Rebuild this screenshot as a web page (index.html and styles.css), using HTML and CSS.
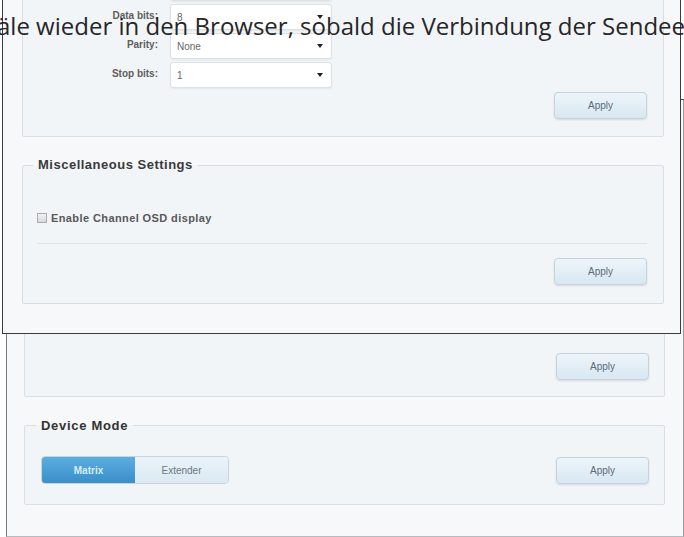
FILE: index.html
```html
<!DOCTYPE html>
<html lang="de">
<head>
  <meta charset="UTF-8">
  <title>Device Settings</title>
  <link rel="stylesheet" href="styles.css">
</head>
<body>
  <div class="page">

    <!-- hintere Aufnahme -->
    <div class="shot back">
      <fieldset class="panel video-panel">
        <div class="panel-foot">
          <button class="apply">Apply</button>
        </div>
      </fieldset>
      <fieldset class="panel mode-panel">
        <legend class="big">Device Mode</legend>
        <div class="panel-foot spread">
          <div class="segmented">
            <span class="seg on">Matrix</span>
            <span class="seg">Extender</span>
          </div>
          <button class="apply">Apply</button>
        </div>
      </fieldset>
    </div>

    <!-- vordere Aufnahme -->
    <div class="shot front">
      <fieldset class="panel serial-panel">
        <div class="row">
          <label>Baud rate:</label>
          <div class="select"><span>9600</span><i class="caret"></i></div>
        </div>
        <div class="row">
          <label>Data bits:</label>
          <div class="select"><span>8</span><i class="caret"></i></div>
        </div>
        <div class="row">
          <label>Parity:</label>
          <div class="select"><span>None</span><i class="caret"></i></div>
        </div>
        <div class="row">
          <label>Stop bits:</label>
          <div class="select"><span>1</span><i class="caret"></i></div>
        </div>
        <div class="panel-foot serial-foot">
          <button class="apply">Apply</button>
        </div>
      </fieldset>

      <fieldset class="panel misc-panel">
        <legend>Miscellaneous Settings</legend>
        <div class="check-row">
          <span class="checkbox"></span>
          <span>Enable Channel OSD display</span>
        </div>
        <hr class="sep">
        <div class="panel-foot">
          <button class="apply">Apply</button>
        </div>
      </fieldset>
    </div>

    <span class="edge-tick"></span>

    <p class="doc-line">äle wieder in den Browser, sobald die Verbindung der Sendee</p>
  </div>
</body>
</html>
```

FILE: styles.css
```css
body {
  margin: 0;
  padding: 0;
  background: #ffffff;
  font-family: 'Liberation Sans', Arial, sans-serif;
}
.page {
  position: relative;
  width: 684px;
  height: 537px;
  overflow: hidden;
  padding-top: 99px;
  box-sizing: border-box;
}

/* screenshot frames */
.shot {
  box-sizing: border-box;
  background: #f6f8fa;
}
.back {
  margin-left: 6px;
  width: 678px;
  height: 438px;
  border: 1px solid #9a9a9a;
  border-top-color: #444;
  border-left-color: #7a7a7a;
  border-bottom-color: #b8bbbe;
  padding: 0 18px 31px 17px;
  display: flex;
  flex-direction: column;
  justify-content: flex-end;
  gap: 21px;
}
.front {
  position: absolute;
  left: 2px;
  top: -40px;
  width: 679px;
  border: 1px solid #3c3c3c;
  padding: 0 16px 29px 19px;
  display: flex;
  flex-direction: column;
  gap: 21px;
}

/* panels */
.panel {
  margin: 0;
  border: 1px solid #d9dee3;
  border-radius: 2px;
  background: #f2f5f8;
  padding: 0 16px 16px 15px;
  min-width: 0;
}
.panel legend {
  margin-left: -5px;
  padding: 0 5px;
  font-size: 13px;
  line-height: 14px;
  letter-spacing: 0.5px;
  font-weight: bold;
  color: #3a3a3a;
}
.panel legend.big {
  line-height: 15px;
  letter-spacing: 0.7px;
  color: #333;
}
.panel-foot {
  display: flex;
  justify-content: flex-end;
  align-items: center;
}
.back .panel {
  padding: 0 15px 16px 16px;
}
.back .video-panel {
  padding-top: 160px;
}
.back .mode-panel {
  padding-top: 23px;
  padding-bottom: 20px;
}
.spread {
  justify-content: space-between;
}

/* serial rows */
.serial-panel {
  padding-top: 13px;
  padding-bottom: 17px;
}
.row {
  display: flex;
  align-items: center;
  height: 26px;
  margin-bottom: 3px;
}
.row label {
  width: 120px;
  margin-right: 12px;
  text-align: right;
  font-size: 10px;
  font-weight: bold;
  color: #5d5d5d;
  position: relative;
  top: -2px;
}
.select {
  width: 162px;
  height: 26px;
  box-sizing: border-box;
  background: #fff;
  border: 1px solid #dde1e5;
  border-radius: 3px;
  box-shadow: 0 1px 2px rgba(0,0,0,0.06);
  display: flex;
  align-items: center;
  justify-content: space-between;
  padding: 0 8px 0 6px;
  font-size: 10px;
  color: #666;
}
.caret {
  width: 0;
  height: 0;
  border-left: 3px solid transparent;
  border-right: 3px solid transparent;
  border-top: 4px solid #222;
}
.serial-foot {
  margin-top: 4px;
}

/* misc */
.misc-panel {
  padding-top: 39px;
  padding-bottom: 18px;
}
.check-row {
  display: flex;
  align-items: center;
  gap: 4px;
  height: 14px;
  margin-left: -1px;
  font-size: 11px;
  letter-spacing: 0.4px;
  font-weight: bold;
  color: #585858;
}
.checkbox {
  width: 8px;
  height: 8px;
  border: 1px solid #a9adb1;
  background: linear-gradient(#f2f2f2, #d6d8da);
}
.sep {
  margin: 18px 0 14px;
  border: 0;
  border-top: 1px solid #dde2e6;
}

/* buttons */
.apply {
  width: 93px;
  height: 27px;
  border: 1px solid #c4d3de;
  border-radius: 4px;
  background: linear-gradient(#edf5fa, #d8e7f1);
  box-shadow: 0 1px 2px rgba(80,110,140,0.2);
  font-family: 'Liberation Sans', Arial, sans-serif;
  font-size: 10px;
  color: #5b6a78;
  padding: 0;
}
.segmented {
  display: flex;
  height: 28px;
  border-radius: 4px;
  overflow: hidden;
  border: 1px solid #c5d5e1;
  box-sizing: border-box;
}
.seg {
  width: 93px;
  display: flex;
  align-items: center;
  justify-content: center;
  font-size: 10px;
  color: #6b7784;
  background: linear-gradient(#eaf3f9, #dce9f2);
}
.seg.on {
  color: #d6ebf8;
  font-weight: bold;
  background: linear-gradient(#5aaee0, #3a8fca);
}

/* overlays */
.edge-tick {
  position: absolute;
  left: 681px;
  top: 99px;
  width: 4px;
  height: 1px;
  background: #444;
}
.doc-line {
  position: absolute;
  left: -3px;
  top: 12px;
  margin: 0;
  white-space: nowrap;
  font-family: 'Open Sans', sans-serif;
  font-size: 24px;
  line-height: 28px;
  color: #262626;
}
```
